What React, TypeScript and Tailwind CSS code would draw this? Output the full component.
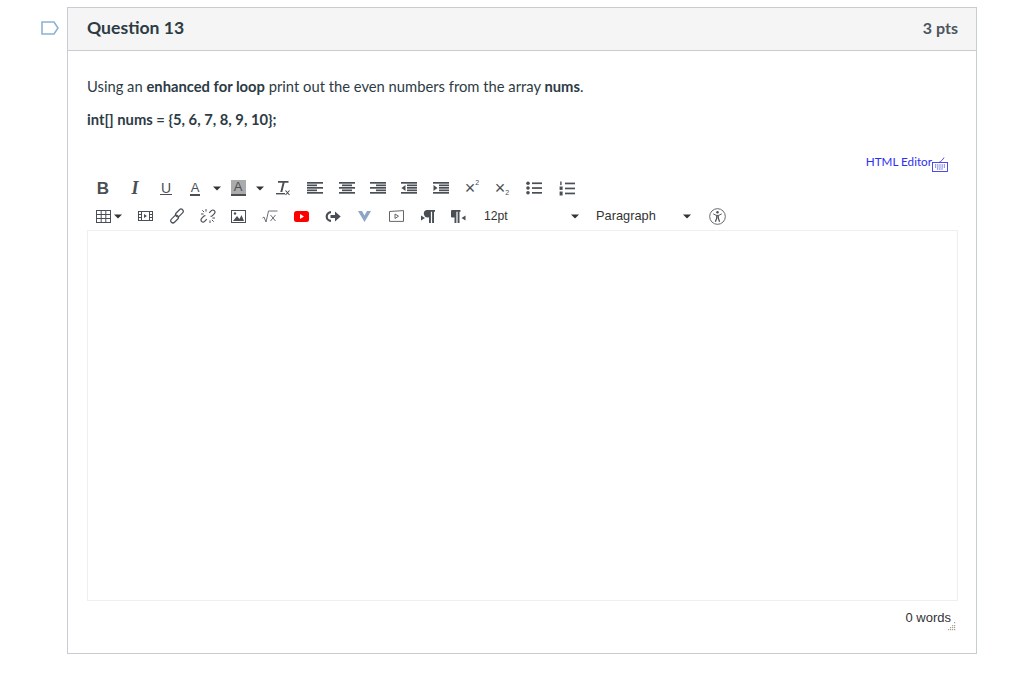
import React from "react";

const c = "#4a4f55";

function Box({ w = 31, children }: { w?: number; children?: React.ReactNode }) {
  return <div className="flex items-center justify-center h-[28px] shrink-0" style={{ width: w }}>{children}</div>;
}

function Caret({ color = "#333" }: { color?: string }) {
  return <svg width="8" height="5" viewBox="0 0 8 5"><path d="M0 0.5h8L4 4.5z" fill={color} /></svg>;
}

function Lines({ rows }: { rows: [number, number][] }) {
  return (
    <svg width="16" height="14" viewBox="0 0 16 14">
      {rows.map(([x, w], i) => (
        <rect key={i} x={x} y={1 + i * 2.5} width={w} height={1.7} fill={c} />
      ))}
    </svg>
  );
}

function Indent({ out }: { out?: boolean }) {
  return (
    <svg width="16" height="14" viewBox="0 0 16 14">
      <rect x="0" y="1" width="16" height="1.7" fill={c} />
      <rect x="6" y="3.5" width="10" height="1.7" fill={c} />
      <rect x="6" y="6" width="10" height="1.7" fill={c} />
      <rect x="6" y="8.5" width="10" height="1.7" fill={c} />
      <rect x="0" y="11" width="16" height="1.7" fill={c} />
      <path d={out ? "M4.5 4v6L0.5 7z" : "M0.5 4v6L4.5 7z"} fill={c} />
    </svg>
  );
}

function Pilcrow({ left }: { left?: boolean }) {
  return (
    <svg width="16" height="15" viewBox="0 0 16 15">
      {left ? (
        <>
          <path d="M6.5 1H15v1.7h-1V14h-1.9V2.7h-1.2V14H9V8.3A3.7 3.7 0 0 1 6.5 1z" fill={c} />
          <path d="M1 6.5v5l4-2.5z" fill={c} />
        </>
      ) : (
        <>
          <path d="M1 1h8.5v1.7h-1V14H6.6V2.7H5.4V14H3.5V8.3A3.7 3.7 0 0 1 1 1z" fill={c} />
          <path d="M14.5 6.5v5l-4-2.5z" fill={c} />
        </>
      )}
    </svg>
  );
}

function Link({ broken }: { broken?: boolean }) {
  return (
    <svg width="16" height="16" viewBox="0 0 16 16" fill="none" stroke={c} strokeWidth="1.2">
      {broken ? (
        <>
          <path d="M6.8 11.2l-2.2 2.2a2.1 2.1 0 0 1-3-3l2.2-2.2a2.1 2.1 0 0 1 1.6-.6" />
          <path d="M9.2 4.8l2.2-2.2a2.1 2.1 0 0 1 3 3l-2.2 2.2a2.1 2.1 0 0 1-1.6.6" />
          <path d="M6 1v2.6M1 6h2.6M10 15v-2.6M15 10h-2.6M2.3 2.3l1.8 1.8M13.7 13.7l-1.8-1.8" strokeWidth="1" />
        </>
      ) : (
        <>
          <rect x="0.4" y="5.9" width="9" height="4.4" rx="2.2" transform="rotate(-45 4.9 8.1) translate(-1.6 2.6)" />
          <rect x="6.6" y="5.7" width="9" height="4.4" rx="2.2" transform="rotate(-45 11.1 7.9) translate(1.6 -2.6)" />
        </>
      )}
    </svg>
  );
}

function Row1() {
  return (
    <div className="flex items-center h-[28px]">
      <Box w={32}><span className="font-['Liberation_Sans',sans-serif] font-bold text-[17px] leading-none text-[#4a4f55]">B</span></Box>
      <Box w={32}><span className="font-['Liberation_Serif',serif] italic font-bold text-[18px] leading-none text-[#4a4f55]">I</span></Box>
      <Box w={30}>
        <span className="font-['Liberation_Sans',sans-serif] text-[14px] leading-[12px] text-[#4a4f55] border-b-[1.5px] border-[#4a4f55] px-px">U</span>
      </Box>
      <Box w={28}>
        <span className="font-['Liberation_Sans',sans-serif] text-[13px] leading-[13px] text-[#4a4f55] border-b-2 border-[#4a4f55] px-px">A</span>
      </Box>
      <Box w={16}><Caret /></Box>
      <Box w={26}>
        <span className="flex h-[16px] w-[15px] items-center justify-center bg-[#ababab] font-['Liberation_Sans',sans-serif] text-[13px] text-[#4a4f55] border-b-2 border-[#4a4f55]">A</span>
      </Box>
      <Box w={18}><Caret /></Box>
      <Box w={28}>
        <svg width="16" height="16" viewBox="0 0 16 16">
          <path d="M3 1h10.5v1.7H9.6L7.3 12H5.3L7.6 2.7H3z" fill={c} />
          <rect x="1" y="13" width="9" height="1.4" fill={c} />
          <path d="M10.5 10.5l4 4.5M14.5 10.5l-4 4.5" stroke={c} strokeWidth="1.1" fill="none" />
        </svg>
      </Box>
      <Box w={36}><Lines rows={[[0, 16], [0, 10], [0, 16], [0, 10], [0, 16]]} /></Box>
      <Box w={28}><Lines rows={[[0, 16], [3, 10], [0, 16], [3, 10], [0, 16]]} /></Box>
      <Box w={34}><Lines rows={[[0, 16], [6, 10], [0, 16], [6, 10], [0, 16]]} /></Box>
      <Box w={28}><Indent out /></Box>
      <Box w={36}><Indent /></Box>
      <Box w={26}>
        <span className="font-['Liberation_Sans',sans-serif] text-[18px] text-[#4a4f55] leading-none">×<sup className="text-[7px] align-[6px]">2</sup></span>
      </Box>
      <Box w={34}>
        <span className="font-['Liberation_Sans',sans-serif] text-[18px] text-[#4a4f55] leading-none">×<sub className="text-[7px] align-[1px]">2</sub></span>
      </Box>
      <Box w={30}>
        <svg width="16" height="14" viewBox="0 0 16 14" fill={c}>
          <circle cx="2" cy="2.2" r="1.8" /><circle cx="2" cy="7" r="1.8" /><circle cx="2" cy="11.8" r="1.8" />
          <rect x="6" y="1.4" width="10" height="1.7" /><rect x="6" y="6.2" width="10" height="1.7" /><rect x="6" y="11" width="10" height="1.7" />
        </svg>
      </Box>
      <Box w={36}>
        <svg width="16" height="15" viewBox="0 0 16 15" fill={c}>
          <rect x="1.2" y="0.5" width="1.4" height="3.6" /><rect x="0.6" y="5.5" width="3" height="3.4" /><rect x="0.6" y="10.5" width="3" height="4" />
          <rect x="6" y="1.6" width="10" height="1.7" /><rect x="6" y="6.6" width="10" height="1.7" /><rect x="6" y="11.6" width="10" height="1.7" />
        </svg>
      </Box>
    </div>
  );
}

function Row2() {
  return (
    <div className="flex items-center h-[28px]">
      <div className="flex items-center justify-end h-[28px] w-[24px] shrink-0">
        <svg width="15" height="13" viewBox="0 0 15 13" fill="none" stroke={c} strokeWidth="1" className="shrink-0">
          <rect x=".5" y=".5" width="14" height="12" />
          <path d="M.5 4.5h14M.5 8.5h14M5.2 .5v12M9.8 .5v12" />
        </svg>
      </div>
      <div className="flex items-center h-[28px] w-[19px] pl-[3px] shrink-0"><Caret /></div>
      <Box w={31}>
        <svg width="15" height="12" viewBox="0 0 15 12" fill="none" stroke={c} strokeWidth="1">
          <rect x=".5" y="1.5" width="14" height="9" />
          <path d="M3.5 1.5v9M11.5 1.5v9M.5 4.5h3M.5 7.5h3M11.5 4.5h3M11.5 7.5h3" />
          <path d="M6 4v4l3-2z" fill={c} stroke="none" />
        </svg>
      </Box>
      <Box w={31}><Link /></Box>
      <Box w={31}><Link broken /></Box>
      <Box w={31}>
        <svg width="15" height="13" viewBox="0 0 15 13">
          <rect x=".5" y=".5" width="14" height="12" fill="none" stroke={c} />
          <path d="M2 11l4-5 2.5 3L10.5 5 13 11z" fill={c} />
          <circle cx="4" cy="3.5" r="1.2" fill={c} />
        </svg>
      </Box>
      <Box w={32}>
        <svg width="16" height="13" viewBox="0 0 16 13" fill="none" stroke="#6b7075" strokeWidth="1">
          <path d="M0.5 8l1.5-1 2 5L6.5 1H15.5" />
          <path d="M8.5 5l5 6M13.5 5l-5 6" />
        </svg>
      </Box>
      <Box w={31}>
        <svg width="15" height="11" viewBox="0 0 15 11">
          <rect width="15" height="11" rx="2.5" fill="#f00" />
          <path d="M6 3v5l4-2.5z" fill="#fff" />
        </svg>
      </Box>
      <Box w={31}>
        <svg width="16" height="13" viewBox="0 0 16 13">
          <path d="M6 2.2A4.3 4.3 0 1 0 6 10.8" fill="none" stroke={c} strokeWidth="2.2" />
          <path d="M5.5 5h4.5V1.5L15.7 6.5 10 11.5V8H5.5z" fill={c} />
        </svg>
      </Box>
      <Box w={32}>
        <svg width="13" height="11" viewBox="0 0 13 11">
          <path d="M0 0h4l2.5 4.5L9 0h4L6.5 11z" fill="#8ca6c4" />
        </svg>
      </Box>
      <Box w={32}>
        <svg width="15" height="12" viewBox="0 0 15 12" fill="none" stroke="#555" strokeWidth=".9">
          <path d="M.5 1.5l14-.9v10.8H.5z" />
          <path d="M6 4v4.5L9.5 6.2z" />
        </svg>
      </Box>
      <Box w={31}><Pilcrow left /></Box>
      <Box w={31}><Pilcrow /></Box>
      <div className="flex items-center w-[105px] h-[28px] pl-[10px] justify-between font-['Liberation_Sans',sans-serif] text-[12.2px] text-[#333] shrink-0">
        <span>12pt</span>
        <Caret />
      </div>
      <div className="flex items-center w-[112px] h-[28px] pl-[17px] justify-between font-['Liberation_Sans',sans-serif] text-[12.8px] text-[#333] shrink-0">
        <span>Paragraph</span>
        <Caret />
      </div>
      <Box w={52}>
        <svg width="17" height="17" viewBox="0 0 18 18" fill="none" stroke={c}>
          <circle cx="9" cy="9" r="8.3" strokeWidth=".9" />
          <circle cx="9" cy="4.6" r="1.3" fill={c} stroke="none" />
          <path d="M4.5 6.2l3.1 1.6h2.8l3.1-1.6" strokeWidth="1" />
          <path d="M8.2 8v2.5L6.8 14.5M9.8 8v2.5l1.4 4" strokeWidth="1.3" />
        </svg>
      </Box>
    </div>
  );
}

export default function App() {
  return (
    <div className="w-[1024px] h-[677px] bg-white overflow-hidden font-['Lato','Liberation_Sans',sans-serif] text-[#2d3b45] pt-[7px] pl-[41px] flex items-start">
      <div className="w-[26px] pt-[14px] shrink-0">
        <svg width="18" height="14" viewBox="0 0 18 14" fill="none">
          <path d="M1 1h12l4 6-4 6H1z" stroke="#8db2d2" strokeWidth="1.6" />
        </svg>
      </div>
      <div className="w-[910px] h-[647px] border border-[#c7cdd1] shrink-0 flex flex-col">
        <div className="h-[43px] bg-[#f5f5f5] border-b border-[#c7cdd1] flex items-center justify-between pl-[19px] pr-[18px] pb-[2px]">
          <span className="text-[17.6px] font-bold">Question 13</span>
          <span className="text-[16px] font-bold text-[#4a5660]">3 pts</span>
        </div>
        <div className="pl-[19px] pr-[18px] flex flex-col">
          <p className="mt-[25px] text-[14.75px] leading-[20px]">
            Using an <b>enhanced for loop</b> print out the even numbers from the array <b>nums</b>.
          </p>
          <p className="mt-[13px] text-[14.75px] leading-[20px] font-bold">
            int[] nums = {"{"}5, 6, 7, 8, 9, 10{"}"};
          </p>
          <div className="mt-[22px] h-[22px] flex justify-end items-center pr-[10px]">
            <span className="text-[11.7px] text-[#2f2ff0]">HTML Editor</span>
            <svg width="16" height="16" viewBox="0 0 16 16" fill="none" stroke="#3a3ae0" strokeWidth=".9" className="mt-[4px]">
              <rect x=".5" y="6.5" width="15" height="9" />
              <path d="M3 9h10M3 11h10M5 13h6" strokeDasharray="1 .8" strokeWidth="1.2" />
              <path d="M7 6.5c2-1 4-3 5-5" />
            </svg>
          </div>
          <div className="mt-[1px] flex flex-col">
            <Row1 />
            <Row2 />
          </div>
          <div className="h-[371px] border border-[#efefef]" />
          <div className="relative h-[28px] flex justify-end items-center pr-[7px] pt-[6px] font-['Liberation_Sans',sans-serif] text-[13px] text-[#333]">
            <span>0 words</span>
            <svg width="9" height="9" viewBox="0 0 9 9" className="absolute right-[2px] bottom-[-2px]" fill="#a8a090">
              <rect x="7" y="0" width="1.2" height="1.2" />
              <rect x="5" y="3" width="1.2" height="1.2" /><rect x="7" y="3" width="1.2" height="1.2" />
              <rect x="3" y="5" width="1.2" height="1.2" /><rect x="5" y="5" width="1.2" height="1.2" /><rect x="7" y="5" width="1.2" height="1.2" />
              <rect x="1" y="7" width="1.2" height="1.2" /><rect x="3" y="7" width="1.2" height="1.2" /><rect x="5" y="7" width="1.2" height="1.2" /><rect x="7" y="7" width="1.2" height="1.2" />
            </svg>
          </div>
        </div>
      </div>
    </div>
  );
}
